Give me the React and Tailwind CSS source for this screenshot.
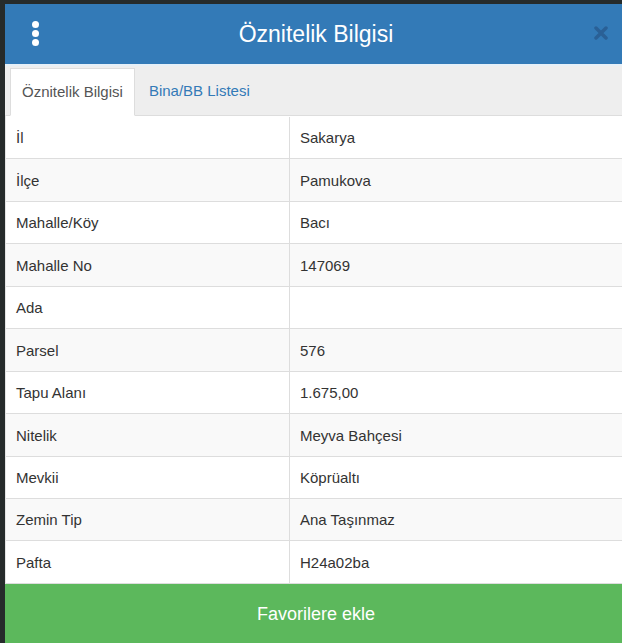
const rows = [
  ['İl', 'Sakarya'],
  ['İlçe', 'Pamukova'],
  ['Mahalle/Köy', 'Bacı'],
  ['Mahalle No', '147069'],
  ['Ada', ''],
  ['Parsel', '576'],
  ['Tapu Alanı', '1.675,00'],
  ['Nitelik', 'Meyva Bahçesi'],
  ['Mevkii', 'Köprüaltı'],
  ['Zemin Tip', 'Ana Taşınmaz'],
  ['Pafta', 'H24a02ba'],
]

export default function App() {
  return (
    <div className="w-[622px] h-[643px] overflow-hidden bg-[#262b2b] pl-[5px] pt-[4px] font-['Liberation_Sans',Arial,sans-serif]">
      <div className="w-[622px] h-[639px] flex flex-col bg-white">
        {/* header */}
        <div className="h-[60px] shrink-0 bg-[#337ab7] flex items-center relative">
          <div className="absolute left-[27px] top-[17px] flex flex-col gap-[2px]">
            <span className="w-[7px] h-[7px] rounded-full bg-white" />
            <span className="w-[7px] h-[7px] rounded-full bg-white" />
            <span className="w-[7px] h-[7px] rounded-full bg-white" />
          </div>
          <h1 className="w-full text-center text-white text-[23px] leading-none">Öznitelik Bilgisi</h1>
          <svg className="absolute right-[19px] top-[22px]" width="14" height="14" viewBox="0 0 14 14">
            <path d="M2 2 L12 12 M12 2 L2 12" stroke="#2a6096" strokeWidth="3.5" strokeLinecap="round" />
          </svg>
        </div>

        {/* tabs */}
        <div className="h-[52px] shrink-0 bg-[#eeeeee] border-t-2 border-[#e6f0f8] border-b border-b-[#dddddd] flex items-end pl-[5px]">
          <div className="h-[48px] px-[11px] flex items-center bg-white border border-[#dddddd] border-b-white -mb-px text-[15px] text-[#555555]">
            Öznitelik Bilgisi
          </div>
          <div className="h-[48px] px-[14px] flex items-center text-[15px] text-[#337ab7]">
            Bina/BB Listesi
          </div>
        </div>

        {/* attribute table */}
        <div className="flex-1 flex flex-col pt-px border-l border-[#e4e4e4]">
          {rows.map(([k, v], i) => (
            <div
              key={k}
              className={`h-[42.45px] shrink-0 flex border-b border-[#dddddd] text-[15px] text-[#333333] ${i % 2 ? 'bg-[#f9f9f9]' : 'bg-white'}`}
            >
              <div className="w-[284px] shrink-0 pl-[10px] pt-[2px] flex items-center border-r border-[#dddddd]">{k}</div>
              <div className="flex-1 pl-[10px] pt-[2px] flex items-center">{v}</div>
            </div>
          ))}
        </div>

        {/* add to favourites */}
        <button className="h-[59px] shrink-0 bg-[#5cb85c] text-white text-[18px] pt-[1px] w-full">
          Favorilere ekle
        </button>
      </div>
    </div>
  )
}
